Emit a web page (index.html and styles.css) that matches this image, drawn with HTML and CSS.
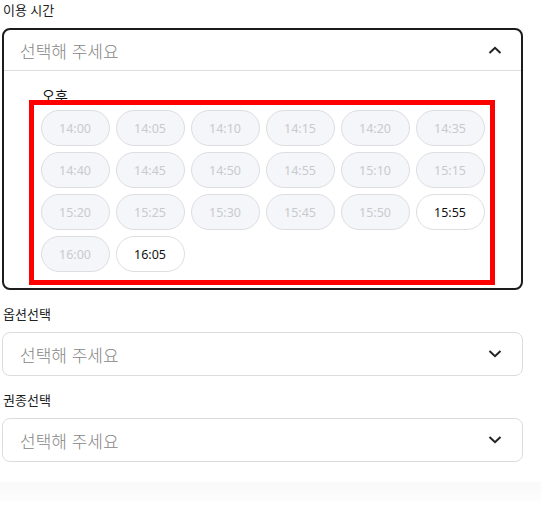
FILE: index.html
```html
<!DOCTYPE html>
<html lang="ko">
<head>
<meta charset="utf-8">
<title>이용 시간</title>
<link rel="stylesheet" href="styles.css">
</head>
<body>
<div class="page">
  <div class="field">
    <div class="label">이용 시간</div>
    <div class="select open">
      <div class="select-head">
        <span class="placeholder">선택해 주세요</span>
        <svg class="chev" width="14" height="8" viewBox="0 0 14 8"><path d="M1.5 7L7 1.8L12.5 7" fill="none" stroke="#222" stroke-width="2"/></svg>
      </div>
      <div class="select-body">
        <div class="period">오후</div>
        <div class="slots">
          <button class="slot off">14:00</button>
          <button class="slot off">14:05</button>
          <button class="slot off">14:10</button>
          <button class="slot off">14:15</button>
          <button class="slot off">14:20</button>
          <button class="slot off">14:35</button>
          <button class="slot off">14:40</button>
          <button class="slot off">14:45</button>
          <button class="slot off">14:50</button>
          <button class="slot off">14:55</button>
          <button class="slot off">15:10</button>
          <button class="slot off">15:15</button>
          <button class="slot off">15:20</button>
          <button class="slot off">15:25</button>
          <button class="slot off">15:30</button>
          <button class="slot off">15:45</button>
          <button class="slot off">15:50</button>
          <button class="slot">15:55</button>
          <button class="slot off">16:00</button>
          <button class="slot">16:05</button>
        </div>
      </div>
      <div class="highlight"></div>
    </div>
  </div>
  <div class="field">
    <div class="label">옵션선택</div>
    <div class="select">
      <div class="select-head">
        <span class="placeholder">선택해 주세요</span>
        <svg class="chev" width="14" height="8" viewBox="0 0 14 8"><path d="M1.5 1L7 6.2L12.5 1" fill="none" stroke="#222" stroke-width="2"/></svg>
      </div>
    </div>
  </div>
  <div class="field">
    <div class="label">권종선택</div>
    <div class="select">
      <div class="select-head">
        <span class="placeholder">선택해 주세요</span>
        <svg class="chev" width="14" height="8" viewBox="0 0 14 8"><path d="M1.5 1L7 6.2L12.5 1" fill="none" stroke="#222" stroke-width="2"/></svg>
      </div>
    </div>
  </div>
  <div class="footer-band"></div>
</div>
</body>
</html>
```

FILE: styles.css
```css
* { box-sizing: border-box; }
html, body { margin: 0; padding: 0; background: #fff; }
body {
  font-family: "Noto Sans", "Noto Sans CJK KR", sans-serif;
  color: #111;
}
.page {
  width: 521px;
  margin-left: 2px;
}
.field + .field { margin-top: 14px; }
.label {
  font-size: 13px;
  line-height: 20px;
  height: 20px;
  margin-bottom: 8px;
  padding-left: 1px;
  color: #222;
}
.select {
  position: relative;
  border: 1px solid #dcdcdc;
  border-radius: 8px;
  background: #fff;
}
.select.open {
  border: 2px solid #1c1c1c;
}
.select-head {
  height: 42px;
  display: flex;
  align-items: center;
  justify-content: space-between;
  padding: 0 20px 0 17px;
}
.select.open .select-head {
  height: 40px;
  padding: 0 19px 0 16px;
  border-bottom: 1px solid #dedede;
  box-sizing: content-box;
}
.placeholder {
  font-family: "Noto Sans CJK KR", sans-serif;
  font-size: 17px;
  font-weight: 300;
  color: #858585;
}
.chev { display: block; }
.select-body {
  padding: 15px 0 16px;
}
.period {
  font-family: "Noto Sans CJK KR", sans-serif;
  font-size: 14px;
  line-height: 18px;
  margin-bottom: 6px;
  padding-left: 38px;
  color: #111;
}
.slots {
  display: grid;
  grid-template-columns: repeat(6, 69px);
  grid-auto-rows: 36px;
  gap: 6px;
  justify-content: center;
}
.slot {
  font-family: "Noto Sans", sans-serif;
  font-size: 12.5px;
  border: 1px solid #dedee2;
  border-radius: 18px;
  background: #fff;
  color: #111;
  padding: 0;
  margin: 0;
}
.slot.off {
  background: #f5f6f9;
  color: #c9cace;
}
.highlight {
  position: absolute;
  left: 25px;
  top: 70px;
  width: 466px;
  height: 185px;
  border: 5px solid #ff0000;
  pointer-events: none;
}
.footer-band {
  margin: 20px 0 0 -2px;
  width: 541px;
  height: 20px;
  background: linear-gradient(#f9f9f9, #fdfdfd);
}
```
